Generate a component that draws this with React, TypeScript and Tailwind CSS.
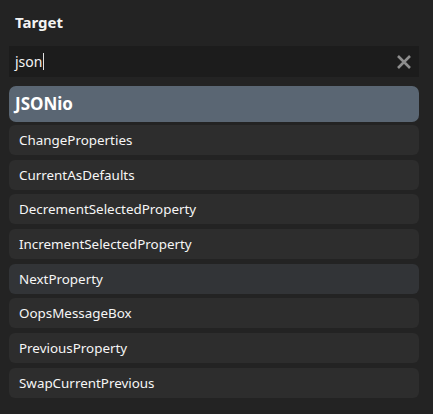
import React from "react";

const items = [
  "ChangeProperties",
  "CurrentAsDefaults",
  "DecrementSelectedProperty",
  "IncrementSelectedProperty",
  "NextProperty",
  "OopsMessageBox",
  "PreviousProperty",
  "SwapCurrentPrevious",
];

export default function App() {
  return (
    <div
      className="w-[433px] h-[414px] bg-[#232323] text-white overflow-hidden pl-[9px] pr-[14px] pt-[10px]"
      style={{ fontFamily: '"Noto Sans", "Open Sans", sans-serif' }}
    >
      <div className="pl-[6px] h-[24px] flex items-center text-[15px] font-bold text-[#f4f4f4]">Target</div>
      <div className="mt-[12px] h-[31px] bg-[#1c1c1c] flex items-center pl-[6px] pr-[8px]">
        <span className="text-[14px] text-[#f4f4f4]">json</span>
        <span className="w-px h-[17px] bg-[#e0e0e0] ml-[1px]" />
        <div className="flex-1" />
        <svg width="14" height="14" viewBox="0 0 14 14">
          <path d="M1 1 L13 13 M13 1 L1 13" stroke="#8d8d8d" strokeWidth="2.6" strokeLinecap="butt" />
        </svg>
      </div>
      <div className="mt-[9px] h-[36px] rounded-[7px] bg-[#5a6673] flex items-center pl-[6px] text-[17px] font-bold text-white">
        JSONio
      </div>
      <div className="mt-[3px] flex flex-col gap-[4.7px]">
        {items.map((t) => (
          <div
            key={t}
            className={`h-[30px] rounded-[6px] flex items-center pl-[10px] text-[13.4px] text-[#f6f6f6] ${
              t === "NextProperty" ? "bg-[#323437]" : "bg-[#2d2d2d]"
            }`}
          >
            {t}
          </div>
        ))}
      </div>
    </div>
  );
}
